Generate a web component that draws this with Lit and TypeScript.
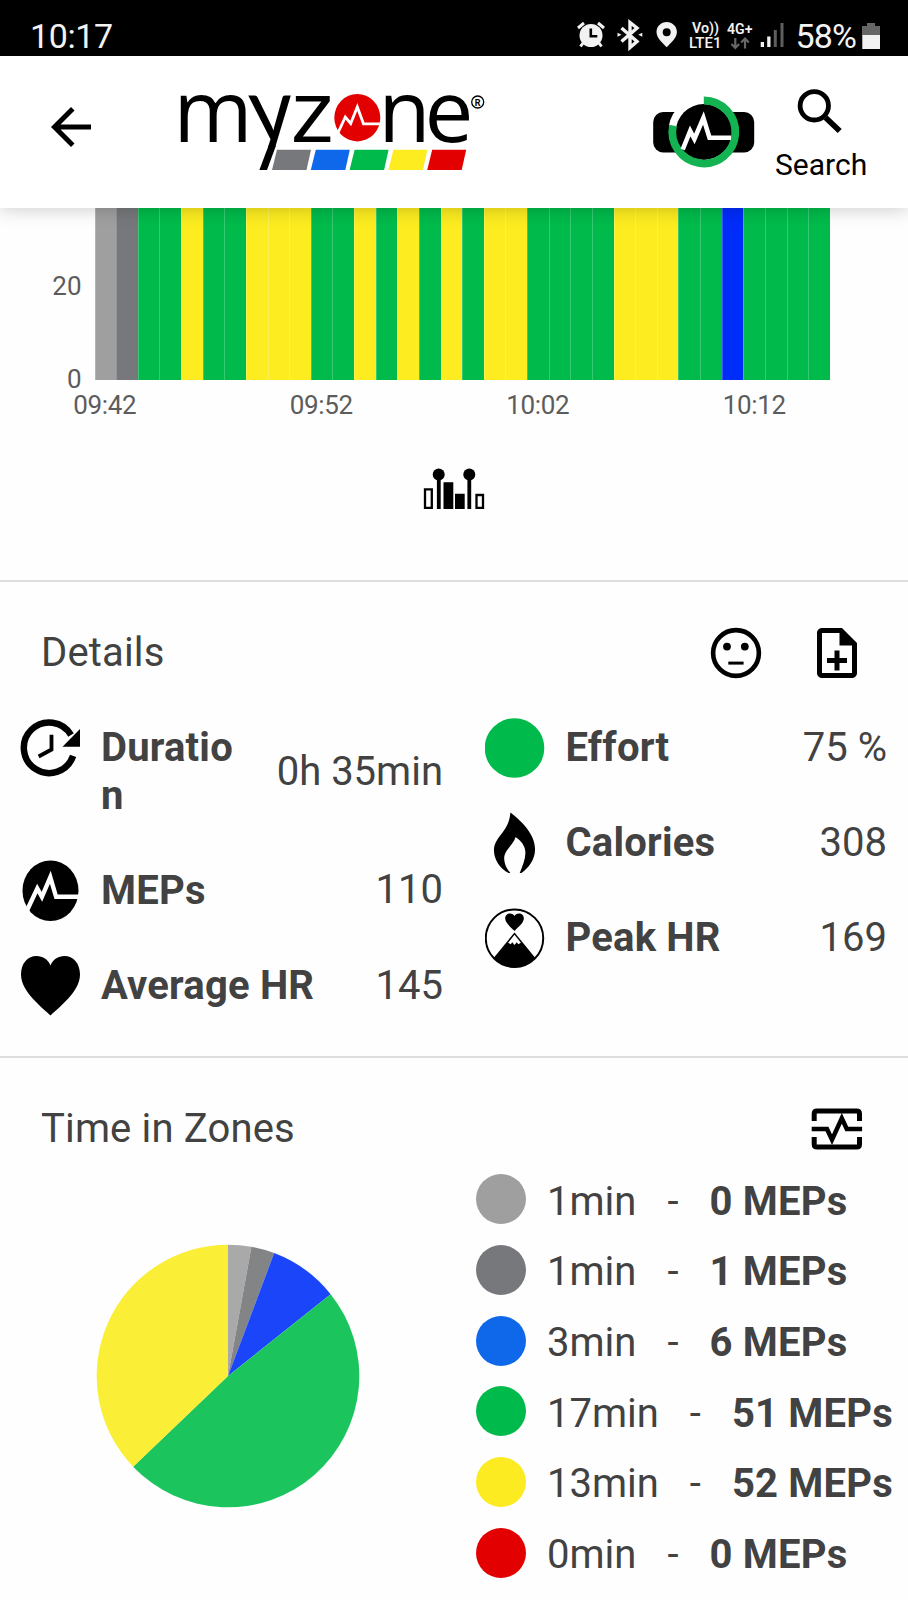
import { LitElement, html, svg, css } from "lit";
import { customElement } from "lit/decorators.js";

const GREEN = "#00bb4b";
const YELLOW = "#fcec20";
const ZONE: Record<string, string> = {
  l: "#9f9f9f",
  d: "#77787b",
  b: "#002cfa",
  g: GREEN,
  y: YELLOW,
};
const MINUTES = "ldggyggyyyggygygygyyggggyyyggbgggg".split("");

const LEGEND = [
  { color: "#9f9f9f", time: "1min", meps: "0 MEPs" },
  { color: "#77787b", time: "1min", meps: "1 MEPs" },
  { color: "#0f67ea", time: "3min", meps: "6 MEPs" },
  { color: "#00bb4b", time: "17min", meps: "51 MEPs" },
  { color: "#fbeb20", time: "13min", meps: "52 MEPs" },
  { color: "#e20000", time: "0min", meps: "0 MEPs" },
];

const SLICES = [
  { value: 1, color: "#a9a9a9" },
  { value: 1, color: "#838486" },
  { value: 3, color: "#1a45f8" },
  { value: 17, color: "#1cc45e" },
  { value: 13, color: "#faee37" },
];

const durationIcon = html`<svg width="60" height="60" viewBox="19.5 717.5 60 60">
  <path d="M70.5 734.5A25.3 25.3 0 1 0 72.6 755.4" fill="none" stroke="#000" stroke-width="6.5" />
  <path d="M80 728v18.3H62z" />
  <path d="M51 734.3V749l-12.8 7" fill="none" stroke="#000" stroke-width="3.8" />
</svg>`;

const mepsIcon = html`<svg width="60" height="62" viewBox="20 860 60 62">
  <ellipse cx="50.5" cy="890.7" rx="28" ry="30.3" />
  <path d="M26.5 911.5l10.8-23 4.6 8.3 8.4-19.5 5.8 19.5H80" fill="none" stroke="#fff" stroke-width="4.4" />
</svg>`;

const heartIcon = html`<svg width="60" height="62" viewBox="20 955 60 62">
  <path d="M50.5 1015.5C43 1008 21 992 21 974.5C21 963 28 956 36.5 956C43 956 48 959.5 50.5 965.5C53 959.5 58 956 64.5 956C73 956 80 963 80 974.5C80 992 58 1008 50.5 1015.5z" />
</svg>`;

const effortIcon = html`<svg width="61" height="61" viewBox="484.5 717.5 61 61">
  <circle cx="514.5" cy="747.5" r="30.3" fill="#00bb4b" />
</svg>`;

const caloriesIcon = html`<svg width="61" height="62" viewBox="484.5 812 61 62">
  <path d="M510.3 812C521 820 535.4 834 535.4 849C535.4 860 529 868 521.5 873.5H519.8C522.5 867 525.5 860 525.6 853C525.5 846 521 840.5 515.6 837C514 844.5 504 850 504 858.5C504 864.5 507 869.5 510.2 873.5H508.5C500 869 493.6 860 493.6 850.5C493.8 836 509 832 510.3 812z" />
</svg>`;

const peakIcon = html`<svg width="61" height="61" viewBox="484.5 907.5 61 61">
  <circle cx="514.5" cy="937.7" r="29.2" fill="#fff" stroke="#000" stroke-width="2" />
  <path d="M514.5 930.5C511 926.5 505 922.5 505 917.5C505 914.5 507.2 912.5 510 912.5C512 912.5 513.8 913.5 514.5 915.2C515.2 913.5 517 912.5 519 912.5C521.8 912.5 524 914.5 524 917.5C524 922.5 518 926.5 514.5 930.5z" />
  <path d="M514.5 931.8L535.5 957.5Q526 967.5 514.5 967.5T493.5 957.5z" />
  <path d="M514.5 934.3l6.5 8-2.7 1.5-1.5-2-2.3 2.8-2.3-2.8-1.5 2-2.7-1.5z" fill="#fff" />
</svg>`;

@customElement("metric-row")
class MetricRow extends LitElement {
  static properties = { label: {}, value: {}, icon: { attribute: false } };
  static styles = css`
    :host { display: grid; grid-template-columns: 60px minmax(0, 1fr) auto; column-gap: 21px; min-height: 95.2px; }
    .icon { height: 94.5px; display: flex; align-items: center; }
    svg { display: block; }
    .label { padding-top: 23px; padding-bottom: 24.5px; font-weight: 700; line-height: 47.5px; overflow-wrap: anywhere; letter-spacing: 0.2px; }
    .value { align-self: center; line-height: 47.5px; white-space: nowrap; padding: 0 0 2px 20px; }
  `;
  render() {
    const { label, value, icon } = this as any;
    return html`<div class="icon">${icon}</div>
      <div class="label">${label}</div>
      <div class="value">${value}</div>`;
  }
}

@customElement("app-root")
class AppRoot extends LitElement {
  static styles = css`
    :host { display: block; height: 1600px; overflow: hidden; background: #fefefe; color: #424242; font: 40px/47.5px Roboto, sans-serif; }
    * { box-sizing: border-box; }
    svg { display: block; flex: none; }
    .status { height: 56px; background: #000; color: #f2f2f2; display: flex; align-items: center; padding: 15px 28px 0 30px; font-size: 34px; line-height: 40px; }
    .clock { flex: 1; letter-spacing: -0.4px; }
    .pct { margin: 0 6px 0 6px; letter-spacing: -0.9px; }
    .header { height: 152px; background: #fff; display: flex; padding: 0 42px 0 41px; box-shadow: 0 2px 17px rgba(0, 0, 0, 0.19); position: relative; z-index: 1; clip-path: inset(0 0 -30px 0); }
    .back { margin-top: 41px; }
    .logo { margin: 24px 0 0 69px; overflow: visible; }
    .belt { margin: 34px 0 0 160.5px; }
    .search { margin-left: 18.5px; color: #000; width: 94px; display: flex; flex-direction: column; align-items: center; font-size: 30px; line-height: 36px; padding-top: 29px; gap: 12px; }
    .chart { display: grid; grid-template-columns: 94.5px 735.2px; height: 172px; font-size: 26px; line-height: 30px; color: #5c5c5c; }
    .ticks { display: flex; flex-direction: column; justify-content: space-between; align-items: flex-end; padding: 62.5px 13px 0 0; margin-bottom: -14px; }
    .bars { display: flex; }
    .bar { flex: 1; background: var(--zone); box-shadow: inset 1px 0 rgba(255, 255, 255, 0.22); }
    .times { display: grid; grid-template-columns: repeat(4, 216.5px); margin: 10px 0 0 -3.5px; font-size: 26px; line-height: 30px; color: #5c5c5c; text-align: center; letter-spacing: -0.3px; }
    .range { display: flex; justify-content: center; padding-top: 47px; height: 160px; }
    .section { border-top: 2.5px solid #dedede; }
    .details { height: 476px; }
    .title { display: flex; align-items: center; height: 119px; padding: 23px 41px 0 41px; }
    .title .name { flex: 1; margin-top: -1px; letter-spacing: 0.15px; }
    .title .note { margin-left: 45px; }
    .title .pulse { margin-right: 2px; }
    .metrics { display: grid; grid-template-columns: 423px 402.5px; column-gap: 41.5px; padding-left: 20px; }
    .zones { display: grid; grid-template-columns: 476px 1fr; align-items: start; }
    .pie { margin: 67px 0 0 96px; }
    .legend { display: grid; grid-auto-rows: 70.7px; margin-top: -11px; }
    .row { display: flex; align-items: center; white-space: pre; }
    .dot { width: 50px; height: 50px; border-radius: 50%; background: var(--zone); margin: 0 21px 4px 0; }
    .dash { margin: 0 31px; }
    .meps { font-weight: 700; letter-spacing: 0.2px; }
  `;

  pie() {
    let at = 0;
    const point = (v: number) => {
      const a = (v / 35) * Math.PI * 2;
      return `${132 + 131.3 * Math.sin(a)} ${132 - 131.3 * Math.cos(a)}`;
    };
    return SLICES.map((s) => {
      const from = point(at);
      at += s.value;
      return svg`<path d="M132 132L${from}A131.3 131.3 0 0 1 ${point(at)}z" fill=${s.color} />`;
    });
  }

  render() {
    return html`
      <div class="status">
        <span class="clock">10:17</span>
        <svg width="216" height="34" viewBox="574 19 216 34" fill="#f2f2f2" font-family="Roboto, sans-serif">
          <circle cx="591" cy="35.5" r="11.5" />
          <path d="M578 28l6-5M604 28l-6-5M583 43l-2.5 3.5M599 43l2.5 3.5" stroke="#f2f2f2" stroke-width="3" fill="none" />
          <path d="M590.8 28.5v7.8h6.5" fill="none" stroke="#000" stroke-width="2.6" />
          <path d="M621.5 28l15.5 13.5-7 6V22.5l7 5.5-15.5 13.5" fill="none" stroke="#f2f2f2" stroke-width="3.4" />
          <path d="M617.5 32.8l4 2-4 2zM642.3 32.8l-4 2 4 2z" />
          <path d="M666.7 22c-5.7 0-10.2 4.4-10.2 10 0 6.5 6.5 11 10.2 15.3 3.7-4.3 10.2-8.8 10.2-15.3 0-5.6-4.5-10-10.2-10zm0 6.3a4 4 0 1 1 0 8 4 4 0 0 1 0-8z" fill-rule="evenodd" />
          <text x="692" y="33" font-size="14.5" font-weight="600" textLength="27" lengthAdjust="spacingAndGlyphs">Vo))</text>
          <text x="689" y="47.7" font-size="15" font-weight="500" textLength="32.5" lengthAdjust="spacingAndGlyphs">LTE1</text>
          <text x="727" y="34" font-size="14.5" font-weight="600" textLength="25.5" lengthAdjust="spacingAndGlyphs">4G+</text>
          <path d="M735.3 38v9.5M731.5 44l3.8 4 3.8-4M745 48.5V39M741.2 42.5l3.8-4 3.8 4" fill="none" stroke="#686868" stroke-width="2.2" />
          <path d="M760.7 42h3.3v5h-3.3zM767.2 36.5h3.3V47h-3.3z" />
          <path d="M773.8 30h3v17h-3zM780.5 23h3v24h-3z" fill="#5e5e5e" />
        </svg>
        <span class="pct">58%</span>
        <svg width="18" height="28" viewBox="861 21 18 28">
          <path d="M866 22h8v3h5v23h-18V25h5z" fill="#666" />
          <path d="M861.5 34H879v14h-17.5z" fill="#f2f2f2" />
        </svg>
      </div>
      <div class="header">
        <svg class="back" width="60" height="60" viewBox="0 0 24 24"><path d="M20 11H7.83l5.59-5.59L12 4l-8 8 8 8 1.41-1.41L7.83 13H20z" /></svg>
        <svg class="logo" width="320" height="100" viewBox="170 80 320 100">
          <clipPath id="above-stripes"><path d="M170 80H490V147H170z" /></clipPath>
          <g font-family="'Open Sans', sans-serif" font-size="86">
            <text x="173.5" y="141.5" textLength="79" lengthAdjust="spacingAndGlyphs">m</text>
            <g clip-path="url(#above-stripes)">
              <text transform="matrix(.93 0 .1 1 252 141.5)" font-family="Lato, sans-serif" font-size="92">y</text>
            </g>
            <text x="290.5" y="141.5" textLength="43.5" lengthAdjust="spacingAndGlyphs">z</text>
            <text x="378.5" y="141.5" textLength="52" lengthAdjust="spacingAndGlyphs">n</text>
            <text x="424.5" y="141.5" textLength="49" lengthAdjust="spacingAndGlyphs">e</text>
          </g>
          <path d="M268.6 145.5h7.4L267 170h-7.6z" />
          <ellipse cx="357.3" cy="117.7" rx="23" ry="23.7" fill="#e30000" />
          <path d="M337 135l8.3-18 5.4 6.5 6.6-16.5 6.2 16.8H381" fill="none" stroke="#fff" stroke-width="2.8" />
          ${["#77787b", "#0f67ea", "#00bb4b", "#fcec20", "#e20000"].map(
            (c, i) => svg`<path transform="translate(${i * 38.8} 0)" d="M277 149.7H311L306.5 170H272z" fill=${c} />`
          )}
          <circle cx="477.7" cy="102" r="6" fill="none" stroke="#000" stroke-width="1.3" />
          <text x="474.7" y="105.5" font-size="9" font-weight="700" font-family="Roboto, sans-serif">R</text>
        </svg>
        <svg class="belt" width="106" height="80" viewBox="651 90 106 80">
          <rect x="653.2" y="112" width="101" height="40.5" rx="10" />
          <path d="M703.8 132L668.8 126A35.5 35.5 0 0 1 703.8 96.5z" fill="#fff" />
          <circle cx="703.8" cy="132" r="28" />
          <path d="M703.8 100.5A31.5 31.5 0 1 1 673 125.5" fill="none" stroke="#14b352" stroke-width="7.8" />
          <path d="M682.7 149.5l7.5-18.5 4.2 8 9-21 6.1 19.7h21.5" fill="none" stroke="#fff" stroke-width="4.6" />
        </svg>
        <div class="search">
          <svg width="50" height="50" viewBox="796 85 50 50">
            <circle cx="814.3" cy="105.8" r="14.2" fill="none" stroke="#000" stroke-width="4.8" />
            <path d="M825.5 117.5l14.2 13.5" stroke="#000" stroke-width="5.8" />
          </svg>
          <span>Search</span>
        </div>
      </div>
      <div class="chart">
        <div class="ticks"><span>20</span><span>0</span></div>
        <div class="bars">${MINUTES.map((z) => html`<div class="bar" style="--zone:${ZONE[z]}"></div>`)}</div>
      </div>
      <div class="times"><span>09:42</span><span>09:52</span><span>10:02</span><span>10:12</span></div>
      <div class="range">
        <svg width="64" height="44" viewBox="422 467 64 44">
          <path d="M425 489.3h6.8v18.5H425zM476.5 495h6.5v12.8h-6.5z" fill="none" stroke="#000" stroke-width="2.3" />
          <circle cx="438.7" cy="474.5" r="6" /><circle cx="469.3" cy="474.5" r="6" />
          <path d="M436.9 475h3.8v34h-3.8zM467.4 475h3.8v34h-3.8zM443.5 482.3h9.8V509h-9.8zM455 493.7h9.7V509H455z" />
        </svg>
      </div>
      <div class="section details">
        <div class="title">
          <span class="name">Details</span>
          <svg width="52" height="52" viewBox="710.7 626.7 52 52">
            <circle cx="736.7" cy="652.7" r="22.9" fill="none" stroke="#000" stroke-width="4.6" />
            <circle cx="727.7" cy="646.3" r="3.9" /><circle cx="745.5" cy="646.3" r="3.9" />
            <path d="M729 662.8h15.3" stroke="#000" stroke-width="3" />
          </svg>
          <svg class="note" width="60" height="60" viewBox="0 0 24 24">
            <path d="M14 2H6c-1.1 0-2 .9-2 2v16c0 1.1.9 2 2 2h12c1.1 0 2-.9 2-2V8zM6 4h7v5h5v11H6z" fill-rule="evenodd" />
            <path d="M11 11h2v3h3v2h-3v3h-2v-3H8v-2h3z" />
          </svg>
        </div>
        <div class="metrics">
          <div>
            <metric-row label="Duration" value="0h 35min" .icon=${durationIcon}></metric-row>
            <metric-row label="MEPs" value="110" .icon=${mepsIcon}></metric-row>
            <metric-row label="Average HR" value="145" .icon=${heartIcon}></metric-row>
          </div>
          <div>
            <metric-row label="Effort" value="75 %" .icon=${effortIcon}></metric-row>
            <metric-row label="Calories" value="308" .icon=${caloriesIcon}></metric-row>
            <metric-row label="Peak HR" value="169" .icon=${peakIcon}></metric-row>
          </div>
        </div>
      </div>
      <div class="section">
        <div class="title">
          <span class="name">Time in Zones</span>
          <svg class="pulse" width="56" height="44" viewBox="809.5 1101.5 56 44" fill="none" stroke="#000" stroke-width="5">
            <path d="M814.7 1115.5v-7.2q0-2.9 2.9-2.9h39.5q2.9 0 2.9 2.9v7.2M814.7 1131.5v7.2q0 2.9 2.9 2.9h39.5q2.9 0 2.9-2.9v-7.2" />
            <path d="M812.2 1123.5h15.3l5 10.7 9.8-21.4 5 10.7h15.3" stroke-width="4.5" />
          </svg>
        </div>
        <div class="zones">
          <svg class="pie" width="264" height="264" viewBox="0 0 264 264">${this.pie()}</svg>
          <div class="legend">
            ${LEGEND.map(
              (r) => html`<div class="row"><span class="dot" style="--zone:${r.color}"></span><span>${r.time}</span><span class="dash">-</span><span class="meps">${r.meps}</span></div>`
            )}
          </div>
        </div>
      </div>
    `;
  }
}
